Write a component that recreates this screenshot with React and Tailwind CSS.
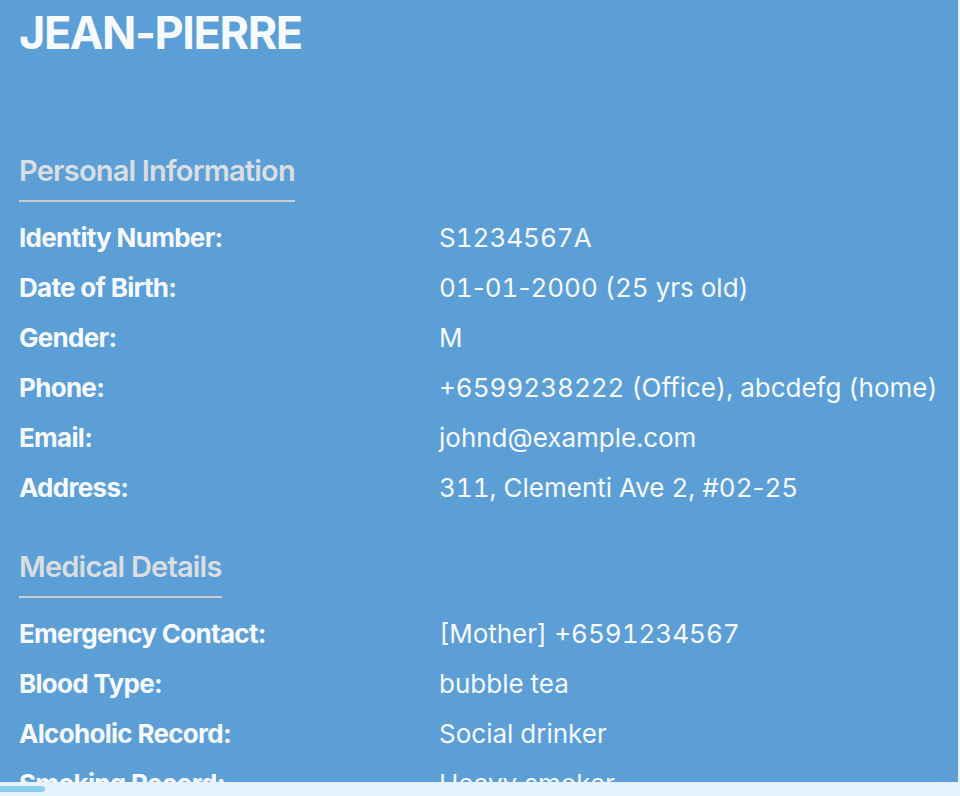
import React from "react";

const personal = [
  ["Identity Number:", "S1234567A"],
  ["Date of Birth:", "01-01-2000 (25 yrs old)"],
  ["Gender:", "M"],
  ["Phone:", "+6599238222 (Office), abcdefg (home)"],
  ["Email:", "johnd@example.com"],
  ["Address:", "311, Clementi Ave 2, #02-25"],
];

const medical = [
  ["Emergency Contact:", "[Mother] +6591234567"],
  ["Blood Type:", "bubble tea"],
  ["Alcoholic Record:", "Social drinker"],
  ["Smoking Record:", "Heavy smoker"],
];

// tabular digits, but keep hyphens at their normal width
function Value({ text }) {
  const parts = text.split("-");
  return parts.map((p, i) => (
    <React.Fragment key={i}>
      {i > 0 && <span className="normal-nums">-</span>}
      {p}
    </React.Fragment>
  ));
}

function SectionTitle({ children }) {
  return (
    <div className="flex">
      <h2 className="pt-[2px] text-[29px] leading-none font-semibold tracking-[-0.8px] text-[#dadee3] pb-[15px] border-b-2 border-[#c9cdd2]">
        {children}
      </h2>
    </div>
  );
}

function Rows({ items }) {
  return (
    <div className="mt-[10px]">
      {items.map(([label, value]) => (
        <div key={label} className="flex h-[50px] items-center">
          <div className="w-[420px] shrink-0 text-[26px] font-bold tracking-[-0.7px] text-[#f7fafd]">
            {label}
          </div>
          <div className="text-[26px] tabular-nums text-[#f7fafd] whitespace-nowrap">
            <Value text={value} />
          </div>
        </div>
      ))}
    </div>
  );
}

export default function App() {
  return (
    <div
      className="h-[796px] w-[960px] flex flex-col bg-[#e6f3fc] overflow-hidden"
      style={{ fontFamily: "Inter, 'Noto Sans', sans-serif" }}
    >
      <div className="flex-1 min-h-0 mr-[2px] bg-[#5b9fd6] overflow-hidden px-[19px]">
        <h1 className="pt-[10px] text-[45px] leading-none font-bold tracking-[-1.4px] text-[#f7fafd]">
          JEAN-PIERRE
        </h1>
        <div className="mt-[99px]">
          <SectionTitle>Personal Information</SectionTitle>
          <Rows items={personal} />
        </div>
        <div className="mt-[38px]">
          <SectionTitle>Medical Details</SectionTitle>
          <Rows items={medical} />
        </div>
      </div>
      <div className="h-[14px] shrink-0 flex items-center">
        <div className="h-[6px] w-[45px] rounded-r-full bg-[#8acfec]" />
      </div>
    </div>
  );
}
